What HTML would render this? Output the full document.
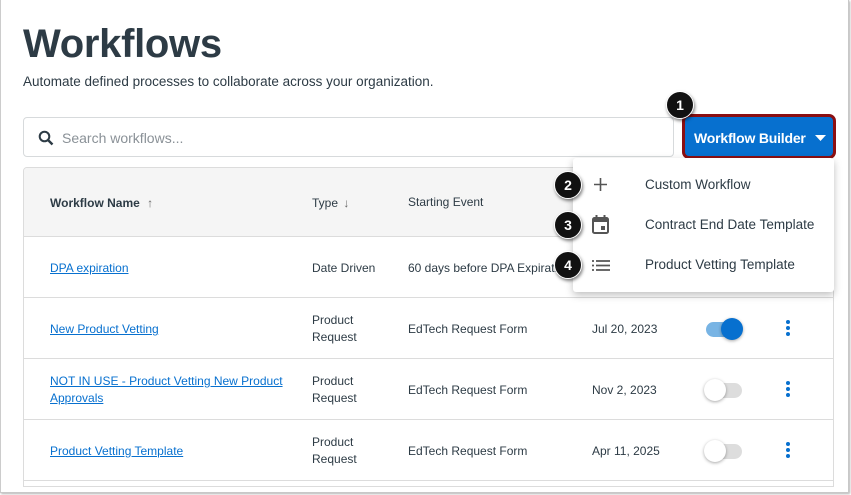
<!DOCTYPE html><html><head><style>
*{box-sizing:border-box;margin:0;padding:0}
body{width:851px;height:495px;background:#fff;font-family:"Liberation Sans",sans-serif;color:#2d3b45;position:relative;overflow:hidden}
.frame{position:absolute;left:0;top:0;width:849px;height:493px;border:1px solid #c8c8c8;border-top:none;border-left:1px solid #ccc;box-shadow:1px 1px 2px rgba(0,0,0,.3)}
.a{position:absolute}
h1{position:absolute;left:23px;top:22px;font-size:40px;font-weight:bold;color:#2d3b45;letter-spacing:-.3px}
.sub{left:23px;top:74px;font-size:13.5px}
.search{left:23px;top:117px;width:651px;height:40px;border:1px solid #d7dadc;border-radius:4px}
.search span{position:absolute;left:38px;top:12px;font-size:14px;color:#8a9197}
.btn{left:682px;top:114px;width:154px;height:45px;border:3px solid #8b0f12;border-radius:7px;background:#0770cf;color:#fff;font-size:14px;font-weight:bold;padding:13px 0 0 9px;white-space:nowrap;letter-spacing:-.2px}
.table{left:23px;top:167px;width:811px;height:320px;border:1px solid #dcdcdc;border-radius:4px 4px 0 0;overflow:hidden}
.head{left:0;top:0;width:809px;height:69px;background:#f5f5f5;border-bottom:1px solid #dcdcdc}
.row{left:0;width:809px;border-bottom:1px solid #dcdcdc;height:61px}
.t{position:absolute;font-size:12px;line-height:17px}
.lnk{color:#0770cf;text-decoration:underline}
.badge{width:28px;height:28px;border-radius:50%;background:#111;color:#fff;font-size:14px;font-weight:bold;text-align:center;line-height:26px;border:1px solid #fff;box-shadow:1px 2px 3px rgba(0,0,0,.5)}
.menu{left:573px;top:158px;width:261px;height:134px;background:#fff;border-radius:3px;box-shadow:0 3px 8px rgba(0,0,0,.25)}
.mi{position:absolute;left:72px;font-size:13.5px;color:#2d3b45;white-space:nowrap}
.tg{width:36px;height:15px;border-radius:8px;background:#ddd}
.knob{width:22px;height:22px;border-radius:50%;background:#fff;box-shadow:0 1px 3px rgba(0,0,0,.35);top:-4px}
.dots{width:4px}
.dots i{display:block;width:4px;height:4px;border-radius:50%;background:#0770cf;margin-bottom:2px}
</style></head><body>
<div class="frame"></div>
<h1>Workflows</h1>
<div class="a sub">Automate defined processes to collaborate across your organization.</div>
<div class="a search"><svg class="a" style="left:14px;top:12px" width="16" height="16" viewBox="0 0 16 16"><circle cx="6.5" cy="6.5" r="4.8" fill="none" stroke="#2d3b45" stroke-width="2"/><path d="M10 10l4.5 4.5" stroke="#2d3b45" stroke-width="2.4"/></svg><span>Search workflows...</span></div>
<div class="a btn">Workflow Builder<svg style="margin-left:9px;vertical-align:2px" width="11" height="6"><path d="M0 0h11L5.5 6z" fill="#fff"/></svg></div>
<div class="a table">
 <div class="a head">
  <div class="t" style="left:26px;top:27px;font-weight:bold">Workflow Name <span style="font-weight:normal;color:#666;margin-left:4px">↑</span></div>
  <div class="t" style="left:288px;top:27px">Type <span style="color:#666;margin-left:2px">↓</span></div>
  <div class="t" style="left:384px;top:26px">Starting Event</div>
 </div>
 <div class="a row" style="top:69px">
  <div class="t lnk" style="left:26px;top:23px">DPA expiration</div>
  <div class="t" style="left:288px;top:23px">Date Driven</div>
  <div class="t" style="left:384px;top:23px">60 days before DPA Expiration</div>
 </div>
 <div class="a row" style="top:130px">
  <div class="t lnk" style="left:26px;top:23px">New Product Vetting</div>
  <div class="t" style="left:288px;top:14px">Product<br>Request</div>
  <div class="t" style="left:384px;top:23px">EdTech Request Form</div>
  <div class="t" style="left:568px;top:23px">Jul 20, 2023</div>
  <div class="a tg" style="left:682px;top:24px;background:#78b4e4"><div class="a knob" style="left:15px;background:#0770cf"></div></div>
  <div class="a dots" style="left:762px;top:22px"><i></i><i></i><i></i></div>
 </div>
 <div class="a row" style="top:191px">
  <div class="t lnk" style="left:26px;top:14px">NOT IN USE - Product Vetting New Product<br>Approvals</div>
  <div class="t" style="left:288px;top:14px">Product<br>Request</div>
  <div class="t" style="left:384px;top:23px">EdTech Request Form</div>
  <div class="t" style="left:568px;top:23px">Nov 2, 2023</div>
  <div class="a tg" style="left:682px;top:24px"><div class="a knob" style="left:-2px"></div></div>
  <div class="a dots" style="left:762px;top:22px"><i></i><i></i><i></i></div>
 </div>
 <div class="a row" style="top:252px">
  <div class="t lnk" style="left:26px;top:23px">Product Vetting Template</div>
  <div class="t" style="left:288px;top:14px">Product<br>Request</div>
  <div class="t" style="left:384px;top:23px">EdTech Request Form</div>
  <div class="t" style="left:568px;top:23px">Apr 11, 2025</div>
  <div class="a tg" style="left:682px;top:24px"><div class="a knob" style="left:-2px"></div></div>
  <div class="a dots" style="left:762px;top:22px"><i></i><i></i><i></i></div>
 </div>
</div>
<div class="a menu">
 <svg class="a" style="left:20px;top:19px" width="15" height="15"><path d="M7.5 1v13M1 7.5h13" stroke="#555" stroke-width="1.6"/></svg>
 <div class="mi" style="top:19px">Custom Workflow</div>
 <svg class="a" style="left:19px;top:57px" width="17" height="19" viewBox="0 0 17 19"><rect x="1" y="3" width="15" height="15" rx="1.5" fill="none" stroke="#555" stroke-width="2"/><rect x="1" y="3" width="15" height="4" fill="#555"/><path d="M4.5 0v4M12.5 0v4" stroke="#555" stroke-width="2"/><rect x="9" y="11" width="4" height="4" fill="#555"/></svg>
 <div class="mi" style="top:59px">Contract End Date Template</div>
 <svg class="a" style="left:19px;top:102px" width="18" height="11"><path d="M0 1h2M0 5.5h2M0 10h2M4 1h14M4 5.5h14M4 10h14" stroke="#555" stroke-width="1.8"/></svg>
 <div class="mi" style="top:99px">Product Vetting Template</div>
</div>
<div class="a badge" style="left:666px;top:91px">1</div>
<div class="a badge" style="left:554px;top:171px">2</div>
<div class="a badge" style="left:554px;top:211px">3</div>
<div class="a badge" style="left:554px;top:251px">4</div>
</body></html>
